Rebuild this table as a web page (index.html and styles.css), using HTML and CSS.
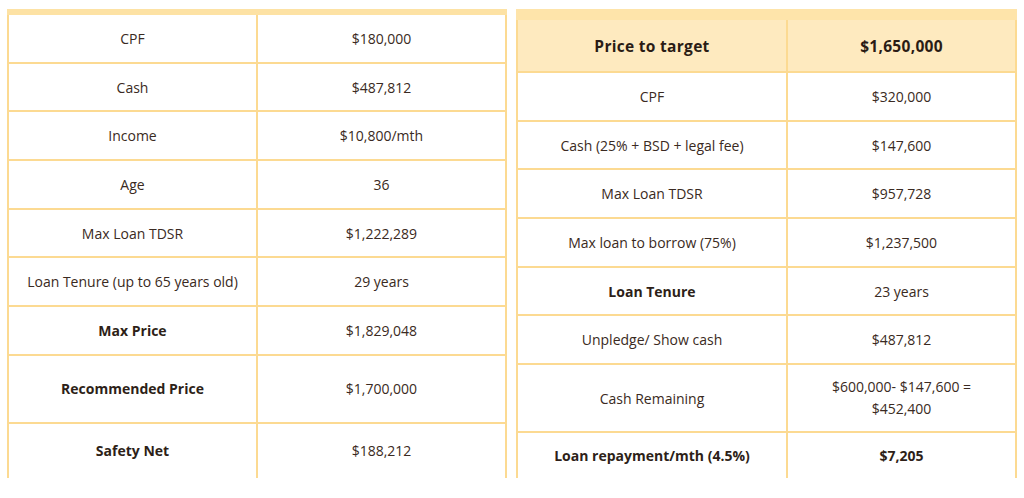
FILE: index.html
```html
<!DOCTYPE html>
<html>
<head>
<meta charset="utf-8">
<link rel="stylesheet" href="styles.css">
</head>
<body>
<div class="page">
  <table class="tbl tbl-left">
    <colgroup><col class="c-half"><col class="c-half"></colgroup>
    <tr><td>CPF</td><td>$180,000</td></tr>
    <tr><td>Cash</td><td>$487,812</td></tr>
    <tr><td>Income</td><td>$10,800/mth</td></tr>
    <tr><td>Age</td><td>36</td></tr>
    <tr><td>Max Loan TDSR</td><td>$1,222,289</td></tr>
    <tr><td>Loan Tenure (up to 65 years old)</td><td>29 years</td></tr>
    <tr><td class="b">Max Price</td><td>$1,829,048</td></tr>
    <tr class="tall"><td class="b">Recommended Price</td><td>$1,700,000</td></tr>
    <tr class="last"><td class="b">Safety Net</td><td>$188,212</td></tr>
  </table>
  <table class="tbl tbl-right">
    <colgroup><col class="c-wide"><col class="c-narrow"></colgroup>
    <tr class="head"><td>Price to target</td><td>$1,650,000</td></tr>
    <tr><td>CPF</td><td>$320,000</td></tr>
    <tr><td>Cash (25% + BSD + legal fee)</td><td>$147,600</td></tr>
    <tr><td>Max Loan TDSR</td><td>$957,728</td></tr>
    <tr><td>Max loan to borrow (75%)</td><td>$1,237,500</td></tr>
    <tr><td class="b">Loan Tenure</td><td>23 years</td></tr>
    <tr><td>Unpledge/ Show cash</td><td>$487,812</td></tr>
    <tr class="tall"><td>Cash Remaining</td><td class="wrap">$600,000- $147,600 =<br>$452,400</td></tr>
    <tr class="last"><td class="b">Loan repayment/mth (4.5%)</td><td class="b">$7,205</td></tr>
  </table>
</div>
</body>
</html>
```

FILE: styles.css
```css
html, body {
  margin: 0;
  padding: 0;
  background: #ffffff;
}
.page {
  display: flex;
  align-items: flex-start;
  gap: 9px;
  padding: 9px 0 0 7px;
  height: 498px;
  box-sizing: border-box;
  overflow: hidden;
}
.tbl {
  border-collapse: collapse;
  table-layout: fixed;
  font-family: "Open Sans", "Liberation Sans", sans-serif;
  font-size: 14px;
  color: #3a2a22;
}
.tbl td {
  border: 2px solid #fcda92;
  text-align: center;
  vertical-align: middle;
  padding: 0 4px;
  height: 46.7px;
}
.tbl .b {
  font-weight: 700;
  color: #2e1f18;
}
.tbl tr.tall td {
  height: 66px;
}
.tbl tr.last td {
  border-bottom: none;
}
.tbl-left tr.last td {
  height: 54px;
}
.tbl-right tr.last td {
  height: 45px;
}
.tbl-left {
  width: 498px;
  border-top: 6px solid #fde2a4;
}
.c-half { width: 249px; }
.tbl-right {
  width: 499px;
  border-top: 11px solid #fee4aa;
}
.c-wide { width: 270px; }
.c-narrow { width: 229px; }
.tbl-right tr.head td {
  background: #feeabf;
  font-weight: 700;
  font-size: 15.5px;
  color: #2a1c15;
  height: 51px;
  letter-spacing: 0.3px;
}
.wrap {
  line-height: 22px;
}
```
